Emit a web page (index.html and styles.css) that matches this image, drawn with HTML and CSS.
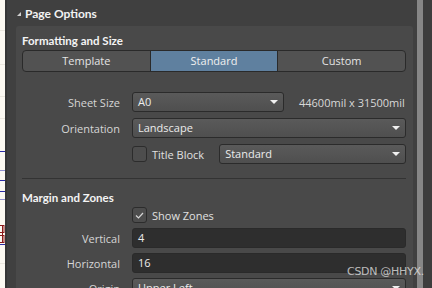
FILE: index.html
```html
<!DOCTYPE html>
<html lang="en">
<head>
  <meta charset="UTF-8">
  <title>Page Options</title>
  <link rel="stylesheet" href="styles.css">
</head>
<body>
  <div class="app">
    <div class="sheet">
      <svg width="5" height="288" viewBox="0 0 5 288">
        <g stroke="#ece8df" stroke-width="1">
          <line x1="0" y1="30.5" x2="5" y2="30.5"/>
          <line x1="0" y1="64.5" x2="5" y2="64.5"/>
          <line x1="0" y1="96.5" x2="5" y2="96.5"/>
          <line x1="0" y1="118.5" x2="5" y2="118.5"/>
          <line x1="0" y1="263.5" x2="5" y2="263.5"/>
        </g>
        <g stroke="#2b2ba6" stroke-width="1">
          <line x1="0" y1="151.5" x2="5" y2="151.5"/>
          <line x1="0" y1="180.5" x2="5" y2="180.5"/>
          <line x1="0" y1="191.5" x2="5" y2="191.5"/>
          <line x1="0" y1="244.5" x2="5" y2="244.5"/>
        </g>
        <g stroke="#9090d0" stroke-width="1">
          <line x1="0" y1="170.5" x2="5" y2="170.5"/>
          <line x1="0" y1="199.5" x2="5" y2="199.5"/>
        </g>
        <g stroke="#8b1a1a" stroke-width="1" fill="none">
          <rect x="-1" y="225.5" width="5" height="7"/>
          <rect x="-1" y="235.5" width="5" height="7"/>
          <line x1="2.5" y1="225" x2="2.5" y2="243"/>
        </g>
      </svg>
    </div>
    <div class="sheet-edge"></div>

    <div class="panel">
      <div class="panel-title"><span class="caret"></span>Page Options</div>

      <div class="card">
        <div class="group-title">Formatting and Size</div>
        <div class="segmented">
          <div class="seg">Template</div>
          <div class="seg active">Standard</div>
          <div class="seg">Custom</div>
        </div>

        <div class="form form-size">
          <div class="label">Sheet Size</div>
          <div class="inline">
            <div class="select select-short">A0<span class="arrow"></span></div>
            <span class="dims">44600mil x 31500mil</span>
          </div>

          <div class="label">Orientation</div>
          <div class="select">Landscape<span class="arrow"></span></div>

          <div></div>
          <div class="inline">
            <span class="check"></span>
            <span class="check-text">Title Block</span>
            <div class="select select-grow">Standard<span class="arrow"></span></div>
          </div>
        </div>

        <div class="divider"></div>

        <div class="group-title">Margin and Zones</div>
        <div class="form form-zones">
          <div></div>
          <div class="inline">
            <span class="check">
              <svg width="11" height="9" viewBox="0 0 11 9"><path d="M2 4.5 L4.5 7 L9 2" fill="none" stroke="#d6d6d6" stroke-width="1.2"/></svg>
            </span>
            <span class="check-text">Show Zones</span>
          </div>

          <div class="label">Vertical</div>
          <div class="input">4</div>

          <div class="label">Horizontal</div>
          <div class="input">16</div>

          <div class="label">Origin</div>
          <div class="select">Upper Left<span class="arrow"></span></div>
        </div>
      </div>
    </div>

    <div class="scrollbar"></div>
    <div class="scroll-track"></div>
  </div>

  <div class="watermark">CSDN @HHYX.</div>
</body>
</html>
```

FILE: styles.css
```css
body {
  margin: 0;
  padding: 0;
  font-family: "Open Sans", "Noto Sans", sans-serif;
  font-size: 11px;
  color: #dcdcdc;
  background-color: #3e3e3e;
  overflow: hidden;
}

.app {
  display: flex;
  width: 432px;
  height: 288px;
  overflow: hidden;
}

.sheet {
  width: 5px;
  flex: none;
  background-color: #fcf9f2;
}

.sheet svg {
  display: block;
}

.sheet-edge {
  width: 2px;
  flex: none;
  background-color: #363636;
}

.panel {
  flex: 1;
  background-color: #404040;
  padding-left: 9px;
  padding-right: 4px;
}

.panel-title {
  height: 26px;
  display: flex;
  align-items: center;
  font-family: Lato, "Open Sans", sans-serif;
  font-weight: bold;
  font-size: 12px;
  color: #f2f2f2;
  padding-left: 1px;
}

.caret {
  width: 0;
  height: 0;
  border-left: 4px solid transparent;
  border-bottom: 4px solid #d0d0d0;
  margin-right: 4px;
  margin-top: 1px;
}

.card {
  background-color: #494949;
  border-radius: 3px 3px 0 0;
  padding: 7px 7px 0 6px;
  height: 280px;
}

.group-title {
  height: 16px;
  line-height: 16px;
  font-family: Lato, "Open Sans", sans-serif;
  font-weight: bold;
  font-size: 11.5px;
  color: #f4f4f4;
}

.segmented {
  display: flex;
  height: 20px;
  margin-top: 1px;
  border: 1px solid #2a2a2a;
  border-radius: 4px;
  overflow: hidden;
  background-color: #525252;
}

.seg {
  flex: 1;
  text-align: center;
  line-height: 20px;
  color: #e4e4e4;
}

.seg + .seg {
  border-left: 1px solid #2a2a2a;
}

.seg.active {
  background-color: #5f809f;
  color: #f0f0f0;
}

.form {
  display: grid;
  grid-template-columns: 98px 1fr;
  column-gap: 12px;
  row-gap: 6px;
  align-items: center;
}

.form-size {
  margin-top: 20px;
  grid-auto-rows: 20px;
}

.form-zones {
  margin-top: 1px;
  row-gap: 5px;
  grid-template-rows: 16px 20px 20px 20px;
}

.label {
  text-align: right;
  color: #d6d6d6;
}

.inline {
  display: flex;
  align-items: center;
  height: 100%;
}

.select {
  position: relative;
  box-sizing: border-box;
  height: 20px;
  line-height: 18px;
  padding-left: 5px;
  border: 1px solid #2b2b2b;
  border-radius: 3px;
  background: linear-gradient(#5a5a5a, #4f4f4f);
  color: #ececec;
}

.select-short {
  width: 152px;
}

.select-grow {
  flex: 1;
  margin-left: 15px;
}

.arrow {
  position: absolute;
  right: 5px;
  top: 7px;
  width: 0;
  height: 0;
  border-left: 4px solid transparent;
  border-right: 4px solid transparent;
  border-top: 4px solid #f0f0f0;
}

.dims {
  margin-left: 15px;
  color: #d8d8d8;
}

.check {
  box-sizing: border-box;
  width: 15px;
  height: 16px;
  border: 1px solid #2c2c2c;
  border-radius: 3px;
  background-color: #4d4d4d;
  display: flex;
  align-items: center;
  justify-content: center;
  flex: none;
}

.check-text {
  margin-left: 5px;
  color: #e0e0e0;
}

.divider {
  height: 1px;
  background-color: #333333;
  margin: 14px 0 11px;
}

.input {
  box-sizing: border-box;
  height: 20px;
  line-height: 18px;
  padding-left: 5px;
  border: 1px solid #2a2a2a;
  border-radius: 3px;
  background-color: #2e2e2e;
  color: #ececec;
}

.scrollbar {
  width: 6px;
  flex: none;
  background-color: #878787;
}

.scroll-track {
  width: 9px;
  flex: none;
  background-color: #3d3d3d;
}

.watermark {
  position: absolute;
  left: 347px;
  top: 265px;
  font-family: "DejaVu Sans", sans-serif;
  font-size: 11px;
  letter-spacing: -0.3px;
  color: rgba(235, 235, 235, 0.75);
}
```
